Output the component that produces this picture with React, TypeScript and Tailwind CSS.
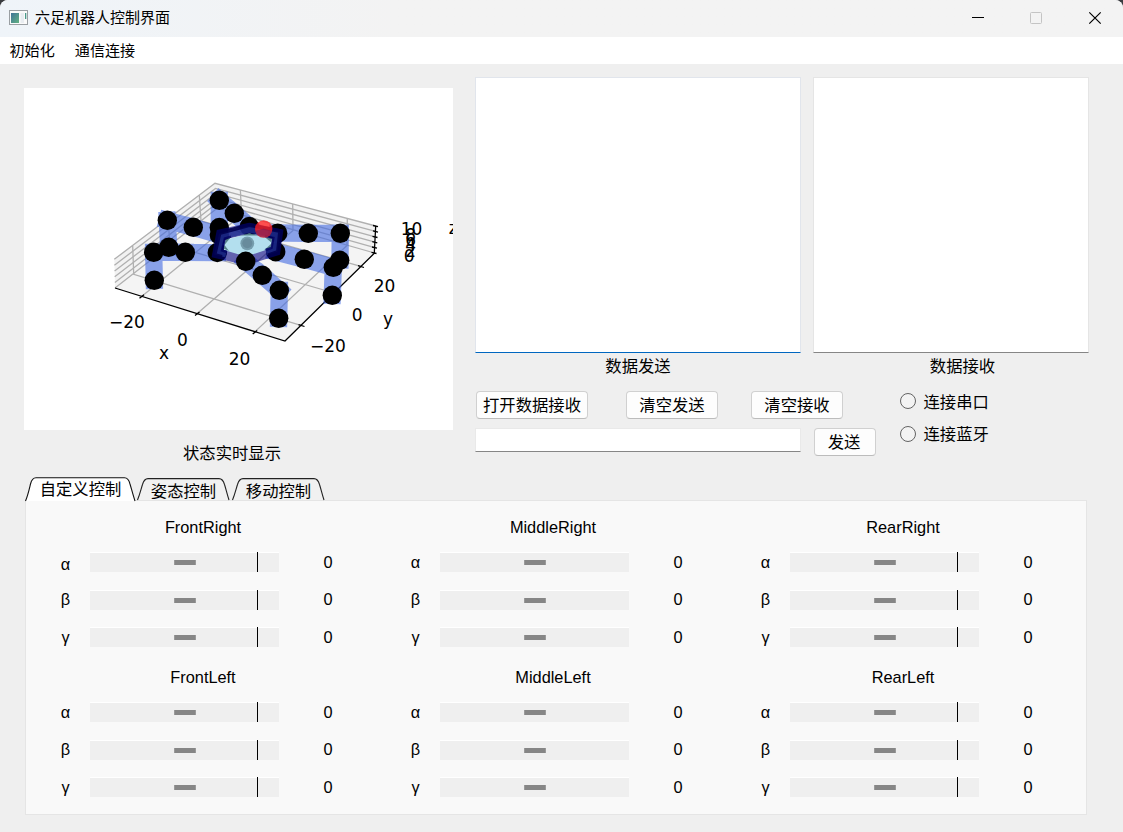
import React from "react";

const legs = [
  "M277.7 233 L308.3 233.3 M308.3 233.3 L340.3 233.3 M340.3 233.3 L340 260",
  "M275.7 252 L304.3 259.3 M304.3 259.3 L333.3 267.3 M333.3 267.3 L332.3 295.3",
  "M245.7 261.3 L262.3 275.3 M262.3 275.3 L279.3 290.3 M279.3 290.3 L278.7 318.3",
  "M217.3 252.5 L185.3 252.3 M185.3 252.3 L153.7 252.3 M153.7 252.3 L154.3 280.3",
  "M219.5 235 L193.3 227.3 M193.3 227.3 L167.3 220.3 M167.3 220.3 L168.7 247.3",
  "M249.3 226.5 L234.3 213.3 M234.3 213.3 L219.3 200.3 M219.3 200.3 L219.3 228",
];

const backJoints = [
  [249.3, 226.5], [234.3, 213.3], [219.3, 200.3], [219.3, 227.5], [219.3, 235],
  [193.3, 227.3], [167.3, 220.3], [168.7, 247.3], [153.7, 252.3], [185.3, 252.3],
  [217.3, 252.5], [154.3, 280.3], [277.7, 233.2], [308.3, 233.3], [340.3, 233.3],
  [339.7, 260.3], [275.7, 251.7], [304.3, 259.3], [333.3, 267.3], [332.3, 295.3],
];

const frontJoints = [[245.7, 261.3], [262.3, 275.3], [279.3, 290.3], [278.7, 318.3]];

const labels: [number, number, string][] = [
  [109, 327.5, "−20"], [177.1, 345.5, "0"], [228.7, 364.5, "20"], [159, 358.9, "x"],
  [310, 351.5, "−20"], [351.8, 320.5, "0"], [383, 325.1, "y"], [373.7, 291.5, "20"],
  [400.8, 234.5, "10"], [405.3, 240.8, "8"], [405.3, 246.3, "6"], [405.3, 251.3, "4"],
  [405.3, 256.8, "2"], [403.7, 261.5, "0"], [448.8, 234.2, "z"],
];

function Plot() {
  return (
    <svg className="block h-[342px] w-[429px] bg-white" viewBox="24 88 429 342">
      <path d="M115 288 L285 341 L374.5 253 L217.5 208Z" fill="#f4f4f4" />
      <path d="M115 288 L114.3 259.3 L215 183.3 L217.5 208Z M217.5 208 L215 183.3 L375.7 226 L374.5 253Z" fill="#f2f2f2" />
      <g fill="none" stroke="#b0b0b0" strokeWidth="1.3">
        <path d="M114.3 259.3 L215 183.3 L375.7 226" />
        <path d="M114.4 265.2 L215.5 188.4 L375.5 231.4" />
        <path d="M114.6 271 L216 193.4 L375.2 236.8" />
        <path d="M114.7 276.8 L216.5 198.4 L375 242.2" />
        <path d="M114.9 282.5 L217 203.3 L374.8 247.6" />
        <path d="M115 288 L217.5 208 L374.5 253" />
        <path d="M132.7 246 L133.7 274.3 L301.7 325.7" />
        <path d="M168 219 L170 245 L334 293" />
        <path d="M199.3 195 L201 221 L361.7 266.7" />
        <path d="M141.3 296.7 L241.5 215 L240.4 190" />
        <path d="M196.7 314 L293 230.5 L292.7 204" />
        <path d="M254.3 332.3 L347 245.5 L347.3 218.5" />
      </g>
      <g fill="none" stroke="#000" strokeWidth="1.3">
        <path d="M115 288 L285 341 L374.3 253.3 L375.7 226" />
        <path d="M139.5 298.2 l4.5 -3.5 M195 315.5 l4.5 -3.5 M252.7 334 l4.5 -3.5 M298.5 324.7 l6 1.8 M330.5 292.3 l6 1.8 M358 265.7 l6 1.8" />
        <path d="M373 225.5 l5 1.2 M373 230.9 l5 1.2 M372.5 236.3 l5 1.2 M372.3 241.7 l5 1.2 M372 247 l5 1.2 M371.5 252.3 l5 1.2" />
      </g>
      {legs.map((d) => (
        <path key={d} d={d} fill="none" stroke="#4169e1" strokeOpacity="0.6" strokeWidth="17.3" strokeLinecap="square" />
      ))}
      {backJoints.map(([x, y]) => (
        <circle key={`${x}-${y}`} cx={x} cy={y} r="9.7" />
      ))}
      <path d="M221.5 234.5 L249.3 228.3 L277.3 234 L275 250.5 L246 259.5 L218 253Z" fill="none" stroke="#000080" strokeOpacity="0.6" strokeWidth="11" />
      <path d="M224.8 240 L249.3 233.6 L272.5 238.5 L271 248.3 L246 256.5 L223.8 250Z" fill="#b3dfee" />
      <path d="M231 237 L226 239 L223.5 248.5 L229 251 L224.5 245Z M264 236.5 L272 238.3 L270.5 248 L264 250.3 L272 243Z M240 235.6 L249.3 233.2 L259 235.6Z" fill="#386469" fillOpacity="0.75" />
      <path d="M226 254 L218 252 L221.7 236.3 L249.3 229.3 L276.7 234.5 L274.5 249.3 L266 252" fill="none" stroke="#20308f" strokeOpacity="0.75" strokeWidth="6.5" />
      <path d="M222 257 L214.4 255 L219.5 233 L249.3 225 L280.2 231 L278 252 L268 255.3" fill="none" stroke="#00004c" strokeOpacity="0.88" strokeWidth="4" />
      <path d="M227 252 L221.9 250.5 L224.9 238.5 L231 236.6 M265 235.9 L273.4 238 L271.6 247.8 L266 249.8" fill="none" stroke="#000060" strokeOpacity="0.75" strokeWidth="2.4" />
      <circle cx="263.7" cy="229" r="8.7" fill="#ff2020" fillOpacity="0.78" />
      <path d="M255.5 231 L263.5 228.5 L272.3 231 L271 234 L266 237.5 L260.5 237 L256.5 234.5Z" fill="#6a2060" fillOpacity="0.5" />
      <circle cx="247.3" cy="243.3" r="6.9" fill="#769dad" />
      <circle cx="247.3" cy="243.3" r="5" fill="#688b9c" />
      {frontJoints.map(([x, y]) => (
        <circle key={`${x}-${y}`} cx={x} cy={y} r="9.7" />
      ))}
      <g className="font-['DejaVu_Sans',sans-serif] text-[17px]">
        {labels.map(([x, y, text]) => (
          <text key={`${x}-${y}`} x={x} y={y}>{text}</text>
        ))}
      </g>
    </svg>
  );
}

function Button({ children, className }: { children: React.ReactNode; className: string }) {
  return (
    <button className={`h-7 shrink-0 whitespace-nowrap rounded-[4px] border border-[#d0d0d0] border-b-[#bcbcbc] bg-[#fdfdfd] leading-[26px] ${className}`}>
      {children}
    </button>
  );
}

function Radio({ label, className }: { label: string; className?: string }) {
  return (
    <label className="flex h-[33px] items-center gap-[7.5px]">
      <span className="size-4 rounded-full border border-[#636363] bg-[#f3f3f3]" />
      <span className={`leading-6 ${className}`}>{label}</span>
    </label>
  );
}

function Tab({ label, active, className }: { label: string; active?: boolean; className: string }) {
  return (
    <div className={`grid grid-rows-[100%] ${className}`}>
      <svg className="col-start-1 row-start-1 h-full w-full overflow-visible" viewBox={active ? "0 0 111 24" : "0 0 93 23"}>
        {active ? (
          <path d="M0.5 24 C3 18 4.5 11 5.5 7 C6.5 3 8 0.8 11 0.8 H99.5 C102.5 0.8 104 3 105 7 C106.5 12 108 18 110 24" fill="#fff" stroke="#111" strokeWidth="1.1" />
        ) : (
          <path d="M0.5 22 C3 16 4 11 5.5 6.5 C6.5 3 8 0.6 11 0.6 H82 C85 0.6 86.5 3 87.5 6.5 C89 11 90 16 92 22" fill="#f1f1f1" stroke="#222" strokeWidth="1.1" />
        )}
      </svg>
      <span className={`z-10 col-start-1 row-start-1 text-center ${active ? "leading-6" : "leading-[26px]"}`}>{label}</span>
    </div>
  );
}

const rowHeights = ["h-[38px]", "h-[37px]", "h-[25px]"];

function LegGroup({ name, lowAlpha, marker = true }: { name: string; lowAlpha?: boolean; marker?: boolean }) {
  const axisLeading = [lowAlpha ? "leading-[25px]" : "leading-[21px]", "leading-[19px]", "leading-[21px]"];
  const valueLeading = ["leading-[20px]", "leading-[18px]", "leading-[20px]"];
  return (
    <section className="w-[350px]">
      <h2 className="h-[50px] pl-1 text-center leading-[50px]">{name}</h2>
      {["α", "β", "γ"].map((axis, i) => (
        <div key={axis} className={`flex pl-[30px] ${rowHeights[i]}`}>
          <span className={`mr-[15px] w-[19px] text-center ${axisLeading[i]}`}>{axis}</span>
          <div className="flex h-5 w-[189px] border-t border-white bg-[#efefef] pl-[84px]">
            <span className="mt-[7px] h-[5px] w-[22px] border-x border-[#9a9a9a] bg-[#868686]" />
            {marker && <span className="-mt-px ml-[61px] h-5 w-px bg-black" />}
          </div>
          <span className={`ml-[39px] w-5 text-center ${valueLeading[i]}`}>0</span>
        </div>
      ))}
    </section>
  );
}

export default function App() {
  return (
    <div className="h-[832px] w-[1123px] overflow-hidden bg-[#3a3c40]">
      <div className="flex h-full flex-col overflow-hidden rounded-t-lg bg-[#efefef] font-['Liberation_Sans','Noto_Sans_CJK_SC',sans-serif] text-[16.33px] text-black">
        <header className="flex h-[37px] shrink-0 items-center bg-linear-to-r from-[#eff4f9] via-[#f3f3f3] via-35% to-[#f3f3f3] pb-[2px] pl-[9px] text-[15px]">
          <svg className="h-4 w-[19px]" viewBox="0 0 19 16">
            <defs>
              <linearGradient id="appIcon" x1="0" y1="0" x2="1" y2="1">
                <stop offset="0" stopColor="#3f7398" />
                <stop offset="1" stopColor="#62b283" />
              </linearGradient>
            </defs>
            <rect x="0.5" y="0.5" width="18" height="14" fill="#fafafa" stroke="#9a9fa3" />
            <rect x="2" y="3" width="8" height="10" fill="url(#appIcon)" />
            <rect x="11.5" y="3" width="3.5" height="10" fill="#e9edf1" />
            <rect x="16" y="3" width="1.3" height="6" fill="#4a9a8a" />
          </svg>
          <h1 className="ml-[7px] flex-1 leading-6">六足机器人控制界面</h1>
          <svg className="mr-[21px] h-4 w-[131px]" viewBox="971 10 131 16" fill="none">
            <path d="M972 17.5 h12" stroke="#000" />
            <rect x="1030.5" y="12.5" width="11" height="11" rx="1" stroke="#c4c4c4" />
            <path d="M1089.3 12.3 l11.4 11.4 M1100.7 12.3 l-11.4 11.4" stroke="#000" strokeWidth="1.2" />
          </svg>
        </header>
        <nav className="flex h-[27px] shrink-0 gap-5 bg-white pl-[9.5px] text-[15.1px] leading-[27px]">
          <span>初始化</span>
          <span>通信连接</span>
        </nav>
        <main className="flex h-[413px] shrink-0 pl-6">
          <section className="mr-[22px] w-[429px] pt-6">
            <Plot />
            <p className="pr-[13px] text-center leading-[46px]">状态实时显示</p>
          </section>
          <section className="w-[614px] pt-[13px]">
            <div className="flex gap-3">
              <div className="h-[276px] w-[326px] border border-[#e1e5ec] border-b-[#0067c0] bg-white" />
              <div className="h-[276px] w-[276px] border border-[#e5e5e5] border-b-[#868686] bg-white" />
            </div>
            <div className="flex h-[38px] gap-3 leading-[27px]">
              <p className="w-[326px] text-center">数据发送</p>
              <p className="w-[276px] pl-[23px] text-center">数据接收</p>
            </div>
            <div className="flex">
              <div className="w-[424px]">
                <div className="flex pl-px">
                  <Button className="mr-[38px] w-28">打开数据接收</Button>
                  <Button className="mr-[33px] w-[92px]">清空发送</Button>
                  <Button className="w-[92px]">清空接收</Button>
                </div>
                <div className="mt-[9px] flex gap-[13px]">
                  <input className="h-6 w-[326px] border border-[#e9e9e9] border-b-[#868686] bg-white" />
                  <Button className="w-[62px] pr-0.5">发送</Button>
                </div>
              </div>
              <div className="-mt-[7px] pl-px">
                <Radio label="连接串口" className="pt-0.5" />
                <Radio label="连接蓝牙" className="pt-px" />
              </div>
            </div>
          </section>
        </main>
        <div className="z-10 -mb-px flex h-6 shrink-0 items-end pl-[25px]">
          <Tab label="自定义控制" active className="h-6 w-[111px]" />
          <Tab label="姿态控制" className="ml-px h-[23px] w-[93px]" />
          <Tab label="移动控制" className="ml-0.5 h-[23px] w-[93px]" />
        </div>
        <div className="ml-[25px] grid h-[315px] w-[1062px] shrink-0 grid-cols-[350px_350px_350px] grid-rows-[150px_150px] border border-[#e5e5e5] bg-[#f9f9f9] pt-px">
          <LegGroup name="FrontRight" lowAlpha />
          <LegGroup name="MiddleRight" marker={false} />
          <LegGroup name="RearRight" />
          <LegGroup name="FrontLeft" />
          <LegGroup name="MiddleLeft" marker={false} />
          <LegGroup name="RearLeft" />
        </div>
      </div>
    </div>
  );
}
